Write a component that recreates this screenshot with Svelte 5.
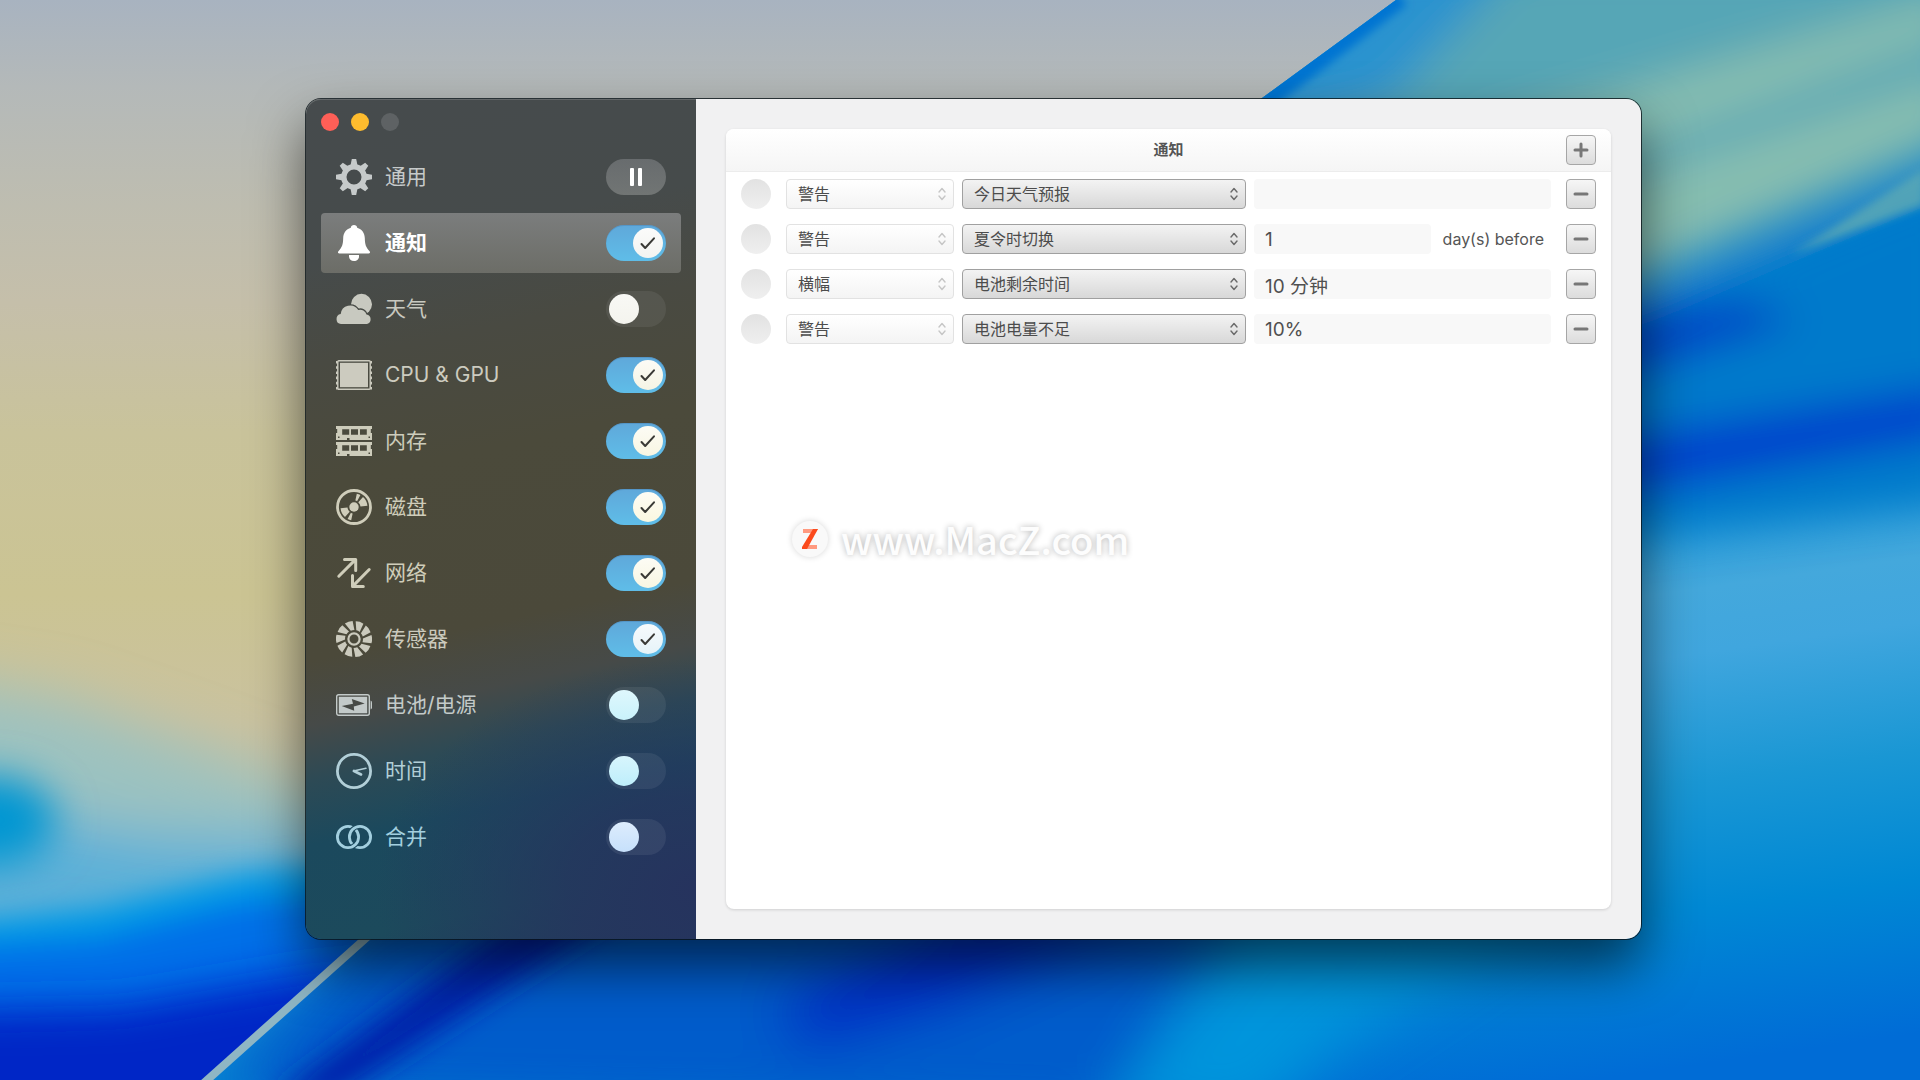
<script>
  let items = $state([
    { id: 'general', label: '通用', tint: '#c6caca', knob: '#ffffff', pause: true },
    { id: 'alerts', label: '通知', tint: '#ffffff', knob: '#f3f4f1', on: true },
    { id: 'weather', label: '天气', tint: '#c8c9c0', knob: '#f4f4ee', on: false },
    { id: 'cpu', label: 'CPU & GPU', tint: '#cccbbf', knob: '#f5f4e4', on: true },
    { id: 'memory', label: '内存', tint: '#cdccbb', knob: '#f8f6e2', on: true },
    { id: 'disk', label: '磁盘', tint: '#cfcdba', knob: '#faf7e0', on: true },
    { id: 'network', label: '网络', tint: '#cfcdba', knob: '#f8f6e2', on: true },
    { id: 'sensors', label: '传感器', tint: '#cbcabd', knob: '#e6f3f8', on: true },
    { id: 'battery', label: '电池/电源', tint: '#c3cac9', knob: '#c9f2fb', on: false },
    { id: 'time', label: '时间', tint: '#b2cfd8', knob: '#bdeefb', on: false },
    { id: 'combined', label: '合并', tint: '#a3cfdf', knob: '#c6e0fb', on: false }
  ]);
  let selected = $state('alerts');

  const styles = ['警告', '横幅'];
  const kinds = ['今日天气预报', '夏令时切换', '电池剩余时间', '电池电量不足'];
  let rules = $state([
    { style: '警告', kind: '今日天气预报', value: '', unit: '' },
    { style: '警告', kind: '夏令时切换', value: '1', unit: 'day(s) before' },
    { style: '横幅', kind: '电池剩余时间', value: '10 分钟', unit: '' },
    { style: '警告', kind: '电池电量不足', value: '10%', unit: '' }
  ]);

  function addRule() {
    rules.push({ style: '警告', kind: kinds[0], value: '', unit: '' });
  }
  function removeRule(i) {
    rules.splice(i, 1);
  }

  const teeth = [0, 45, 90, 135, 180, 225, 270, 315];
  const blades = [0, 36, 72, 108, 144, 180, 216, 252, 288, 324];
</script>

{#snippet icon(id)}
  <svg class="icon" viewBox="0 0 36 36" aria-hidden="true" fill="currentColor">
    {#if id === 'general'}
      <circle cx="18" cy="18" r="10.2" fill="none" stroke="currentColor" stroke-width="5.4" />
      {#each teeth as a}
        <path d="M15.800 0h4.400l1.400 7h-7.200z" transform="rotate({a} 18 18)" />
      {/each}
    {:else if id === 'alerts'}
      <path d="M18 0c1.800 0 3 1.100 3.200 2.700C26 4.200 28.600 8 28.800 13c.2 6.500.8 8.800 4.800 13.200.9 1.100.4 2.300-1 2.300H3.400c-1.400 0-1.900-1.200-1-2.300C6.400 21.800 7 19.500 7.200 13 7.400 8 10 4.200 14.800 2.700 15 1.100 16.200 0 18 0z" />
      <path d="M13 30h10v1.500C23 34 21 36 18 36s-5-2-5-4.500z" />
    {:else if id === 'weather'}
      <mask id="cloud-gap">
        <rect width="36" height="36" fill="#fff" />
        <path d="M5 33a5 5 0 0 1-.3-9.900A9.500 9.500 0 0 1 22.200 19 6.500 6.500 0 0 1 30.500 23.600 4.800 4.800 0 0 1 31 33z" fill="#000" stroke="#000" stroke-width="2.600" />
      </mask>
      <circle cx="25.500" cy="13.300" r="10.500" mask="url(#cloud-gap)" />
      <path d="M5 33a5 5 0 0 1-.3-9.900A9.500 9.500 0 0 1 22.200 19 6.500 6.500 0 0 1 30.500 23.600 4.800 4.800 0 0 1 31 33z" />
    {:else if id === 'cpu'}
      <rect x="1.800" y="3.700" width="32.400" height="28.600" rx="1" fill="none" stroke="currentColor" stroke-width="1.400" />
      <path d="M.9 4v28.600M35.100 4v28.600" stroke="currentColor" stroke-width="1.800" stroke-dasharray="2.600 2.600" />
      <rect x="4" y="5.800" width="28" height="24.400" />
    {:else if id === 'memory'}
      {#each [0, 16] as y}
        <path transform="translate(0 {y})" fill-rule="evenodd" d="M0 3h36v3h-1.200v4H36v7H13.500v-2H11v2H0v-7h1.200V6H0zM6.200 6.200v5.600h7V6.200zM15 6.200v5.600h7V6.200zM24 6.200v5.600h6.800V6.200zM2 13.500V15h1.500v-1.500zM32.500 13.500V15H34v-1.500z" />
      {/each}
    {:else if id === 'disk'}
      <circle cx="18" cy="18" r="16.500" fill="none" stroke="currentColor" stroke-width="2.800" />
      <circle cx="18" cy="18" r="4.700" />
      {#each [0, 180] as a}
        <g transform="rotate({a} 18 18) translate(18 18)">
          <path d="M13.450-1.200A13.500 13.500 0 0 0 9-10L4.300-4.800A6.500 6.500 0 0 1 6.500-.6z" />
          <path d="M6.400-11.900A13.500 13.500 0 0 0 2.800-13.200L1.350-6.400A6.500 6.500 0 0 1 3.100-5.700z" />
        </g>
      {/each}
    {:else if id === 'network'}
      <path d="M2.800 21.200 19.400 4.600M8.500 4.500h11.200v11M33.200 14.500 16.600 31.400M27.300 31.500H16.500v-11" fill="none" stroke="currentColor" stroke-width="3" stroke-linecap="round" stroke-linejoin="round" />
    {:else if id === 'sensors'}
      <circle cx="18" cy="18" r="5.600" fill="none" stroke="currentColor" stroke-width="2.200" />
      {#each blades as a}
        <path d="M-4.500-17.300Q-.5-18.800 3.600-17.600L2.900-8.600A9 9 0 0 0-.8-8.900z" transform="translate(18 18) rotate({a + 20})" />
      {/each}
    {:else if id === 'battery'}
      <rect x=".7" y="7.700" width="32.600" height="20.600" rx="2" fill="none" stroke="currentColor" stroke-width="1.400" />
      <path d="M34.600 13.500q1.400.5 1.400 2v5q0 1.500-1.400 2z" />
      <path fill-rule="evenodd" d="M2.800 9.800h28.400v16.400H2.800zM5.700 18.900l12.500 4.900-.4-4.300 10.900-3L15.800 11.900l1.200 4.800z" />
    {:else if id === 'time'}
      <circle cx="18" cy="18" r="16.600" fill="none" stroke="currentColor" stroke-width="2.800" />
      <path d="m18 18 7 3.400" stroke="currentColor" stroke-width="2.800" stroke-linecap="round" />
      <path d="m17.500 18 12.500-2.700" stroke="currentColor" stroke-width="1.500" stroke-linecap="round" />
    {:else}
      <mask id="ring-left">
        <rect width="36" height="36" fill="#fff" />
        <path d="M13.300 18A10.700 10.700 0 0 1 24 7.300" fill="none" stroke="#000" stroke-width="5" />
      </mask>
      <mask id="ring-right">
        <rect width="36" height="36" fill="#fff" />
        <path d="M22.700 18A10.700 10.700 0 0 1 12 28.700" fill="none" stroke="#000" stroke-width="5" />
      </mask>
      <circle cx="12" cy="18" r="10.600" fill="none" stroke="currentColor" stroke-width="2.800" mask="url(#ring-left)" />
      <circle cx="24" cy="18" r="10.600" fill="none" stroke="currentColor" stroke-width="2.800" mask="url(#ring-right)" />
    {/if}
  </svg>
{/snippet}

{#snippet arrows()}
  <svg class="arrows" viewBox="0 0 8 14" aria-hidden="true">
    <path d="M1 5l3-3.500L7 5M1 9l3 3.500L7 9" fill="none" stroke="currentColor" stroke-width="1.400" stroke-linecap="round" stroke-linejoin="round" />
  </svg>
{/snippet}

<div class="desktop">
  <svg class="wallpaper" viewBox="0 0 1920 1080" preserveAspectRatio="none" aria-hidden="true">
    <defs>
      <linearGradient id="sky" x1="0" y1="0" x2="0" y2="1">
        <stop offset="0" stop-color="#a8b3c0" />
        <stop offset=".08" stop-color="#b4b9b9" />
        <stop offset=".19" stop-color="#bebdb0" />
        <stop offset=".28" stop-color="#c5bfaa" />
        <stop offset=".4" stop-color="#c9c39b" />
        <stop offset=".55" stop-color="#cbc493" />
        <stop offset=".67" stop-color="#cac29f" />
        <stop offset="1" stop-color="#a8bfc0" />
      </linearGradient>
      <linearGradient id="sea" gradientUnits="userSpaceOnUse" x1="1500" y1="450" x2="1590" y2="1080">
        <stop offset="0" stop-color="#0080d0" />
        <stop offset=".12" stop-color="#1f96d6" />
        <stop offset=".26" stop-color="#44a8dc" />
        <stop offset=".36" stop-color="#40a6de" />
        <stop offset=".56" stop-color="#1a97d4" />
        <stop offset=".76" stop-color="#0088d4" />
        <stop offset="1" stop-color="#006cd6" />
      </linearGradient>
      <filter id="b4" x="-20%" y="-20%" width="140%" height="140%"><feGaussianBlur stdDeviation="4" /></filter>
      <filter id="b14" x="-40%" y="-60%" width="180%" height="220%"><feGaussianBlur stdDeviation="14" /></filter>
      <filter id="b20" x="-40%" y="-60%" width="180%" height="220%"><feGaussianBlur stdDeviation="20" /></filter>
      <filter id="b28" x="-60%" y="-100%" width="220%" height="300%"><feGaussianBlur stdDeviation="28" /></filter>
      <clipPath id="right-side"><path d="M1396 0H1920V1080H204L372 938 1262 98z" /></clipPath>
    </defs>
    <rect width="1920" height="1080" fill="url(#sky)" />

    <g filter="url(#b28)">
      <path d="M-100 675 60 700 200 750 330 800 600 800V1180H-100z" fill="#9cc2c0" />
      <path d="M-100 790 150 835 330 840V1180H-100z" fill="#5cb0d8" />
    </g>
    <ellipse cx="-10" cy="820" rx="66" ry="44" fill="#0096d2" filter="url(#b20)" />
    <g filter="url(#b14)">
      <path d="M-60 925 100 908 240 875 420 852V1180H-60z" fill="#009ae6" />
      <path d="M-60 948 100 938 240 903 420 888V1180H-60z" fill="#006fe8" />
    </g>
    <path d="M-100 1010 120 1005 300 975 500 955V1250H-100z" fill="#0026c6" filter="url(#b20)" />

    <g clip-path="url(#right-side)">
      <rect width="1920" height="1080" fill="url(#sea)" />
      <g filter="url(#b20)">
        <path d="M1340-40H1960V150L1640 285 1200 420V98z" fill="#56a6b6" />
        <path d="M1480 130 1960-10V35L1500 200z" fill="#84bcb0" />
        <path d="M1500 220 1960 70V125L1640 265 1500 310z" fill="#86bdb0" />
        <path d="M1330-40H1520L1390 98 1220 140z" fill="#2a93cf" />
        <path d="M1600 320 1960 170V500L1600 540z" fill="#007acb" />
        <path d="M1600 320 1740 300 1800 320 1600 385z" fill="#0044c6" />
        <path d="M1600 440 1960 385V435L1600 500z" fill="#0040cc" />
      </g>
      <path d="M1790 255 1925 168V205z" fill="#5fabb4" opacity=".8" filter="url(#b4)" />
      <g filter="url(#b28)">
        <path d="M200 1100 380 900H1250L1100 1120z" fill="#005ccb" />
        <path d="M980 900 1190 900 940 1010 800 1050 780 1000z" fill="#0026c4" />
        <path d="M1100 1120 1260 900 1560 900 1330 1050 1260 1120z" fill="#0094dc" />
      </g>
      <path d="M540 900 640 900 330 1100 270 1100z" fill="#0022aa" filter="url(#b14)" />
      <path d="M1400-4 1262 102" stroke="#0074d2" stroke-width="22" filter="url(#b4)" />
    </g>
    <path d="M196 1090 375 930" stroke="#8fb6c4" stroke-width="8" />
  </svg>

  <div class="window">
    <aside class="sidebar">
      <div class="lights">
        <button class="light close" aria-label="关闭"></button>
        <button class="light minimize" aria-label="最小化"></button>
        <button class="light zoom" aria-label="缩放" disabled></button>
      </div>
      <nav>
        {#each items as item (item.id)}
          <div class="item" class:selected={selected === item.id} style:--tint={item.tint} style:--knob={item.knob}>
            <a href="#{item.id}" onclick={() => (selected = item.id)}>
              {@render icon(item.id)}
              <span>{item.label}</span>
            </a>
            {#if item.pause}
              <button class="pause" aria-label="暂停">
                <svg viewBox="0 0 12 18" width="12" height="18" aria-hidden="true" fill="#fff">
                  <rect width="4" height="18" rx="1" /><rect x="8" width="4" height="18" rx="1" />
                </svg>
              </button>
            {:else}
              <label class="switch" class:on={item.on}>
                <input type="checkbox" bind:checked={item.on} aria-label={item.label} />
                <span class="knob">
                  {#if item.on}
                    <svg viewBox="0 0 16 14" width="16" height="14" aria-hidden="true">
                      <path d="M1.500 8l3.700 4L14 2.300" fill="none" stroke="#3a3a36" stroke-width="2" stroke-linecap="round" stroke-linejoin="round" />
                    </svg>
                  {/if}
                </span>
              </label>
            {/if}
          </div>
        {/each}
      </nav>
    </aside>

    <main>
      <section class="card">
        <header>
          <h1>通知</h1>
          <button class="square" aria-label="添加" onclick={addRule}>
            <svg viewBox="0 0 16 16" width="16" height="16" aria-hidden="true"><path d="M2 8h12M8 2v12" /></svg>
          </button>
        </header>
        <div class="rules">
          {#each rules as rule, i}
            <div class="rule">
              <span class="dot"></span>
              <div class="fields">
                <div class="select muted">
                  <select bind:value={rule.style} aria-label="提醒样式" disabled>
                    {#each styles as s}<option>{s}</option>{/each}
                  </select>
                  {@render arrows()}
                </div>
                <div class="select kind">
                  <select bind:value={rule.kind} aria-label="通知类型">
                    {#each kinds as k}<option>{k}</option>{/each}
                  </select>
                  {@render arrows()}
                </div>
                <div class="amount">
                  <input type="text" id="value-{i}" bind:value={rule.value} aria-label={rule.unit || '数值'} />
                  {#if rule.unit}<label for="value-{i}">{rule.unit}</label>{/if}
                </div>
              </div>
              <button class="square" aria-label="移除" onclick={() => removeRule(i)}>
                <svg viewBox="0 0 16 16" width="16" height="16" aria-hidden="true"><path d="M2 8h12" /></svg>
              </button>
            </div>
          {/each}
        </div>
        <div class="watermark">
          <span class="badge">
            <svg viewBox="0 0 16 20" width="16" height="20" aria-hidden="true">
              <path d="M1 0h15l-3 4H1zM3 16h12v4H0z" fill="#ff9a80" />
              <path d="M11 0h5L5 20H0v-2z" fill="#fb4a1c" />
            </svg>
          </span>
          <span>www.MacZ.com</span>
        </div>
      </section>
    </main>
  </div>
</div>

<style>
  :global(body) {
    margin: 0;
  }
  .desktop {
    position: relative;
    box-sizing: border-box;
    min-height: 100vh;
    display: flex;
    padding: 99px 279px 141px 306px;
    overflow: hidden;
    font-family: Inter, 'Noto Sans CJK SC', sans-serif;
  }
  .wallpaper {
    position: absolute;
    inset: 0;
    width: 100%;
    height: 100%;
  }
  button,
  select,
  input {
    font: inherit;
    margin: 0;
    padding: 0;
    border: 0;
    box-sizing: border-box;
  }
  .window {
    position: relative;
    flex: 1;
    display: flex;
    min-width: 0;
    border-radius: 15px;
    box-shadow:
      0 0 0 1px rgba(10, 20, 25, 0.8),
      0 27px 54px rgba(0, 0, 0, 0.6);
  }

  .sidebar {
    flex: 0 0 390px;
    box-sizing: border-box;
    padding: 0 15px 30px;
    border-radius: 15px 0 0 15px;
    box-shadow: inset 0 1px 0 rgba(255, 255, 255, 0.16);
    background:
      radial-gradient(ellipse 320px 230px at 100% 94%, #26335e 0%, rgba(38, 51, 94, 0.75) 40%, rgba(38, 51, 94, 0) 100%),
      linear-gradient(168deg, #464b4d 0%, #464b4b 18%, #494a42 29%, #4b4a3b 42%, #4b493a 61%, #464a48 68%, #2d4a55 74%, #1b495d 81%, #1c4a5c 92%, #20405c 100%);
  }
  .lights {
    display: flex;
    gap: 12px;
    height: 48px;
    box-sizing: border-box;
    padding-top: 14px;
  }
  .light {
    width: 18px;
    height: 18px;
    border-radius: 50%;
  }
  .close {
    background: #fe5f57;
  }
  .minimize {
    background: #febc2e;
  }
  .zoom {
    background: #5e6264;
  }
  nav {
    display: flex;
    flex-direction: column;
    gap: 6px;
  }
  .item {
    display: flex;
    align-items: center;
    height: 60px;
    padding: 0 15px;
    border-radius: 4px;
  }
  .item.selected {
    background: linear-gradient(#7b7d7d, #6c6d67);
    font-weight: 700;
  }
  .item a {
    flex: 1;
    display: flex;
    align-items: center;
    gap: 13px;
    color: var(--tint);
    font-size: 21px;
    line-height: 30px;
    text-decoration: none;
  }
  .icon {
    width: 36px;
    height: 36px;
    flex: none;
  }
  .pause {
    width: 60px;
    height: 36px;
    border-radius: 18px;
    background: linear-gradient(#686c6e, #717574);
    display: grid;
    place-items: center;
  }
  .switch {
    position: relative;
    display: flex;
    width: 60px;
    height: 36px;
    box-sizing: border-box;
    padding: 3px;
    border-radius: 18px;
    background: rgba(255, 255, 255, 0.07);
    cursor: pointer;
  }
  .switch.on {
    justify-content: flex-end;
    background: linear-gradient(#5fa8da, #5fbde8);
    box-shadow: inset 0 1px 0 rgba(60, 110, 160, 0.3);
  }
  .switch input {
    position: absolute;
    inset: 0;
    width: 100%;
    height: 100%;
    appearance: none;
    cursor: pointer;
  }
  .knob {
    width: 30px;
    height: 30px;
    border-radius: 50%;
    background: linear-gradient(color-mix(in srgb, var(--knob) 35%, #fff), var(--knob));
    display: grid;
    place-items: center;
  }
  .switch:not(.on) .knob {
    background: linear-gradient(color-mix(in srgb, var(--knob) 60%, #fff), var(--knob));
  }

  main {
    flex: 1;
    min-width: 0;
    display: flex;
    padding: 30px;
    background: #f1f1f2;
    border-radius: 0 15px 15px 0;
  }
  .card {
    position: relative;
    flex: 1;
    min-width: 0;
    background: #fff;
    border-radius: 8px;
    box-shadow: 0 1px 3px rgba(0, 0, 0, 0.14);
  }
  header {
    display: grid;
    grid-template-columns: 30px 1fr 30px;
    align-items: center;
    height: 43px;
    box-sizing: border-box;
    padding: 0 15px;
    border-bottom: 1px solid #ececec;
    border-radius: 8px 8px 0 0;
    background: linear-gradient(#fff, #f5f5f5);
  }
  h1 {
    grid-column: 2;
    margin: 0;
    font-size: 15px;
    line-height: 22px;
    font-weight: 700;
    text-align: center;
    color: #555;
  }
  .square {
    width: 30px;
    height: 30px;
    border: 1px solid #a6a6a6;
    border-radius: 4px;
    background: linear-gradient(#f6f6f6, #dcdcdc);
    display: grid;
    place-items: center;
  }
  .square path {
    fill: none;
    stroke: #777;
    stroke-width: 3;
    stroke-linecap: round;
  }
  .rules {
    display: flex;
    flex-direction: column;
    gap: 15px;
    padding: 7px 15px;
  }
  .rule {
    display: flex;
    gap: 15px;
    height: 30px;
  }
  .dot {
    flex: none;
    width: 30px;
    height: 30px;
    border-radius: 50%;
    background: linear-gradient(#e2e2e2, #efefef);
  }
  .fields {
    flex: 1;
    min-width: 0;
    display: grid;
    grid-template-columns: 168px 284px 1fr;
    gap: 8px;
  }
  .select {
    position: relative;
    display: flex;
    color: #6a6a6a;
  }
  .select select {
    flex: 1;
    appearance: none;
    border: 1px solid #a0a0a0;
    border-radius: 4px;
    padding: 0 24px 0 11px;
    background: linear-gradient(#f3f3f3, #d8d8d8);
    color: #4c4c4c;
    font-size: 16px;
    opacity: 1;
  }
  .select.muted {
    color: #c6c6c6;
  }
  .muted select {
    border-color: #e2e2e2;
    background: linear-gradient(#fff, #f4f4f4);
  }
  .arrows {
    position: absolute;
    right: 8px;
    top: 8px;
    width: 8px;
    height: 14px;
    pointer-events: none;
  }
  .amount {
    display: flex;
    align-items: center;
    gap: 12px;
    min-width: 0;
  }
  .amount input {
    flex: 1;
    min-width: 0;
    height: 30px;
    padding: 0 11px;
    border-radius: 4px;
    background: #f8f8f8;
    color: #505050;
    font-size: 19px;
  }
  .amount label {
    padding-right: 7px;
    font-size: 16px;
    color: #555;
  }
  .watermark {
    position: absolute;
    left: 66px;
    top: 385px;
    display: flex;
    align-items: center;
    gap: 13px;
    height: 50px;
    color: #fdfdfd;
    font: 500 38px/50px 'Noto Sans CJK SC', sans-serif;
    text-shadow: 0 0 6px rgba(0, 0, 0, 0.3);
    pointer-events: none;
  }
  .badge {
    width: 36px;
    height: 36px;
    border-radius: 50%;
    background: #f9f9f9;
    box-shadow: 0 0 6px rgba(0, 0, 0, 0.16);
    display: grid;
    place-items: center;
  }
</style>
